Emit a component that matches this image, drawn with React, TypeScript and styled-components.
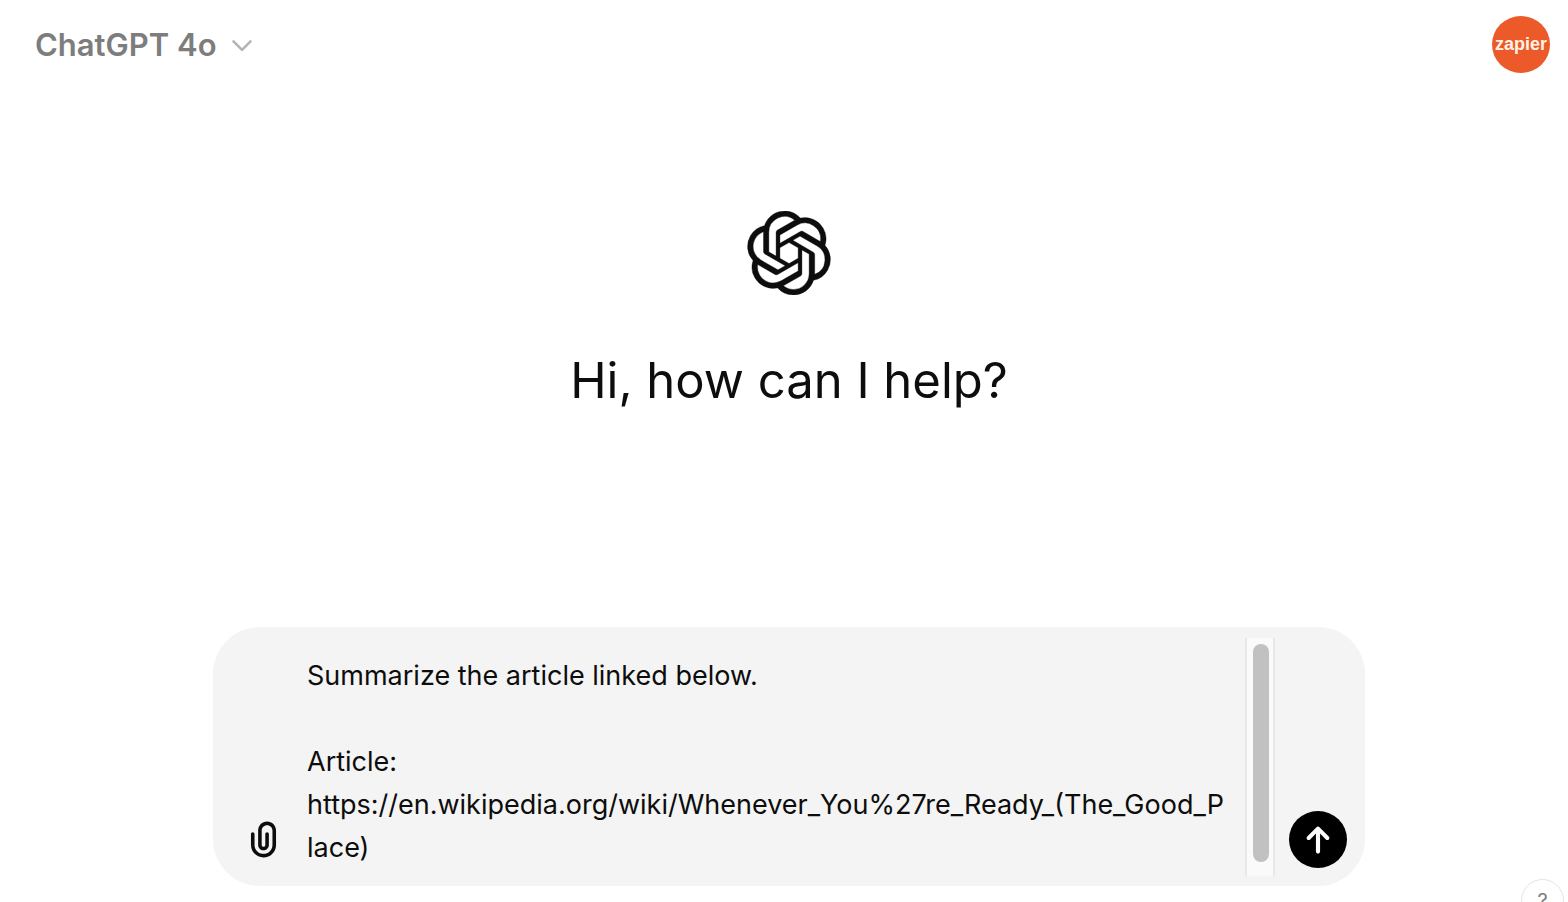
import { useState } from "react";
import styled, { createGlobalStyle } from "styled-components";
import { SiOpenai } from "react-icons/si";

const GlobalStyle = createGlobalStyle`
  *, *::before, *::after { box-sizing: border-box; }
  body {
    margin: 0;
    background: #fff;
    color: #0d0d0d;
    font-family: Inter, "Liberation Sans", sans-serif;
  }
  button { font-family: inherit; cursor: pointer; }
`;

const Page = styled.div`
  display: flex;
  flex-direction: column;
  min-height: 100vh;
`;

const Header = styled.header`
  display: flex;
  align-items: center;
  justify-content: space-between;
  padding: 16px 18px 16px 35px;
`;

const ModelButton = styled.button`
  display: flex;
  align-items: center;
  gap: 14px;
  padding: 0;
  border: 0;
  background: none;
  color: #7d7d7d;
  font-size: 31px;
  font-weight: 600;
  line-height: 40px;
`;

const Avatar = styled.button`
  display: flex;
  align-items: center;
  justify-content: center;
  width: 58px;
  height: 57px;
  padding: 0 0 2px;
  border: 0;
  border-radius: 50%;
  background: #ec5a29;
  color: #fff3e6;
  && { font-family: "Liberation Sans", Arial, sans-serif; }
  font-size: 18px;
  font-weight: 700;
  line-height: 24px;
`;

const Main = styled.main`
  flex: 1;
  display: flex;
  flex-direction: column;
  align-items: center;
  padding: 0 16px 16px 26px;
`;

const Greeting = styled.section`
  flex: 1;
  display: flex;
  flex-direction: column;
  align-items: center;
  gap: 54px;
  padding-top: 122px;
`;

const Title = styled.h1`
  margin: 0;
  font-size: 49px;
  font-weight: 400;
  line-height: 64px;
`;

const Composer = styled.form`
  display: flex;
  align-items: flex-end;
  width: 100%;
  max-width: 1152px;
  padding: 11px 18px 10px 29px;
  border-radius: 47px;
  background: #f4f4f4;
`;

const AttachButton = styled.button`
  display: flex;
  margin: 0 22px 15px 0;
  padding: 0;
  border: 0;
  background: none;
  color: #0d0d0d;
`;

const Prompt = styled.textarea`
  flex: 1;
  min-width: 0;
  height: 238px;
  padding: 16px 18px 0 0;
  border: 0;
  outline: 0;
  resize: none;
  overflow: hidden;
  background: none;
  color: #0d0d0d;
  font-family: inherit;
  font-size: 27px;
  line-height: 43px;
  word-break: break-word;
`;

const ScrollTrack = styled.div`
  align-self: stretch;
  width: 30px;
  padding: 6px 4px 14px 6px;
  border: solid #e8e8e8;
  border-width: 0 2px;
  background: #fafafa;
`;

const ScrollThumb = styled.div`
  width: 16px;
  height: 100%;
  border-radius: 8px;
  background: #c1c1c1;
`;

const SendButton = styled.button`
  display: flex;
  align-items: center;
  justify-content: center;
  width: 58px;
  height: 57px;
  margin: 0 0 8px 14px;
  padding: 0;
  border: 0;
  border-radius: 50%;
  background: #000;
  color: #fff;
`;

const HelpButton = styled.button`
  position: fixed;
  right: 4px;
  bottom: -20px;
  width: 43px;
  height: 43px;
  padding: 0;
  border: 1px solid #e3e3e3;
  border-radius: 50%;
  background: #fff;
  color: #7d7d7d;
  font-size: 20px;
  line-height: 40px;
`;

const ChevronIcon = () => (
  <svg width="22" height="14" viewBox="0 0 22 14" fill="none" aria-hidden="true">
    <path d="M2.5 3.4 11 11.8 19.5 3.4" stroke="#b4b4b4" strokeWidth="2.6" strokeLinecap="round" strokeLinejoin="round" />
  </svg>
);

const PaperclipIcon = () => (
  <svg width="43" height="43" viewBox="0 0 24 24" fill="currentColor" aria-hidden="true">
    <path
      fillRule="evenodd"
      clipRule="evenodd"
      d="M9 7C9 4.23858 11.2386 2 14 2C16.7614 2 19 4.23858 19 7V15C19 18.866 15.866 22 12 22C8.13401 22 5 18.866 5 15V9C5 8.44772 5.44772 8 6 8C6.55228 8 7 8.44772 7 9V15C7 17.7614 9.23858 20 12 20C14.7614 20 17 17.7614 17 15V7C17 5.34315 15.6569 4 14 4C12.3431 4 11 5.34315 11 7V15C11 15.5523 11.4477 16 12 16C12.5523 16 13 15.5523 13 15V9C13 8.44772 13.4477 8 14 8C14.5523 8 15 8.44772 15 9V15C15 16.6569 13.6569 18 12 18C10.3431 18 9 16.6569 9 15V7Z"
    />
  </svg>
);

const ArrowUpIcon = () => (
  <svg width="58" height="58" viewBox="0 0 32 32" fill="currentColor" aria-hidden="true">
    <path d="M15.1918 8.90615C15.6381 8.45983 16.3618 8.45983 16.8081 8.90615L21.9509 14.049C22.3972 14.4953 22.3972 15.2189 21.9509 15.6652C21.5046 16.1116 20.781 16.1116 20.3347 15.6652L17.1428 12.4734V22.2857C17.1428 22.9169 16.6311 23.4286 15.9999 23.4286C15.3688 23.4286 14.8571 22.9169 14.8571 22.2857V12.4734L11.6652 15.6652C11.2189 16.1116 10.4953 16.1116 10.049 15.6652C9.60265 15.2189 9.60265 14.4953 10.049 14.049L15.1918 8.90615Z" />
  </svg>
);

const initialPrompt = `Summarize the article linked below.

Article:
https://en.wikipedia.org/wiki/Whenever_You%27re_Ready_(The_Good_Place)`;

export default function App() {
  const [prompt, setPrompt] = useState(initialPrompt);

  return (
    <>
      <GlobalStyle />
      <Page>
        <Header>
          <ModelButton type="button">
            ChatGPT 4o
            <ChevronIcon />
          </ModelButton>
          <Avatar type="button">zapier</Avatar>
        </Header>
        <Main>
          <Greeting>
            <SiOpenai size={84} stroke="currentColor" strokeWidth="0.1" aria-hidden="true" />
            <Title>Hi, how can I help?</Title>
          </Greeting>
          <Composer onSubmit={(event) => event.preventDefault()}>
            <AttachButton type="button" aria-label="Attach files">
              <PaperclipIcon />
            </AttachButton>
            <Prompt
              aria-label="Message"
              spellCheck={false}
              value={prompt}
              onChange={(event) => setPrompt(event.target.value)}
            />
            <ScrollTrack aria-hidden="true">
              <ScrollThumb />
            </ScrollTrack>
            <SendButton type="submit" aria-label="Send message">
              <ArrowUpIcon />
            </SendButton>
          </Composer>
        </Main>
        <HelpButton type="button" aria-label="Help">?</HelpButton>
      </Page>
    </>
  );
}
